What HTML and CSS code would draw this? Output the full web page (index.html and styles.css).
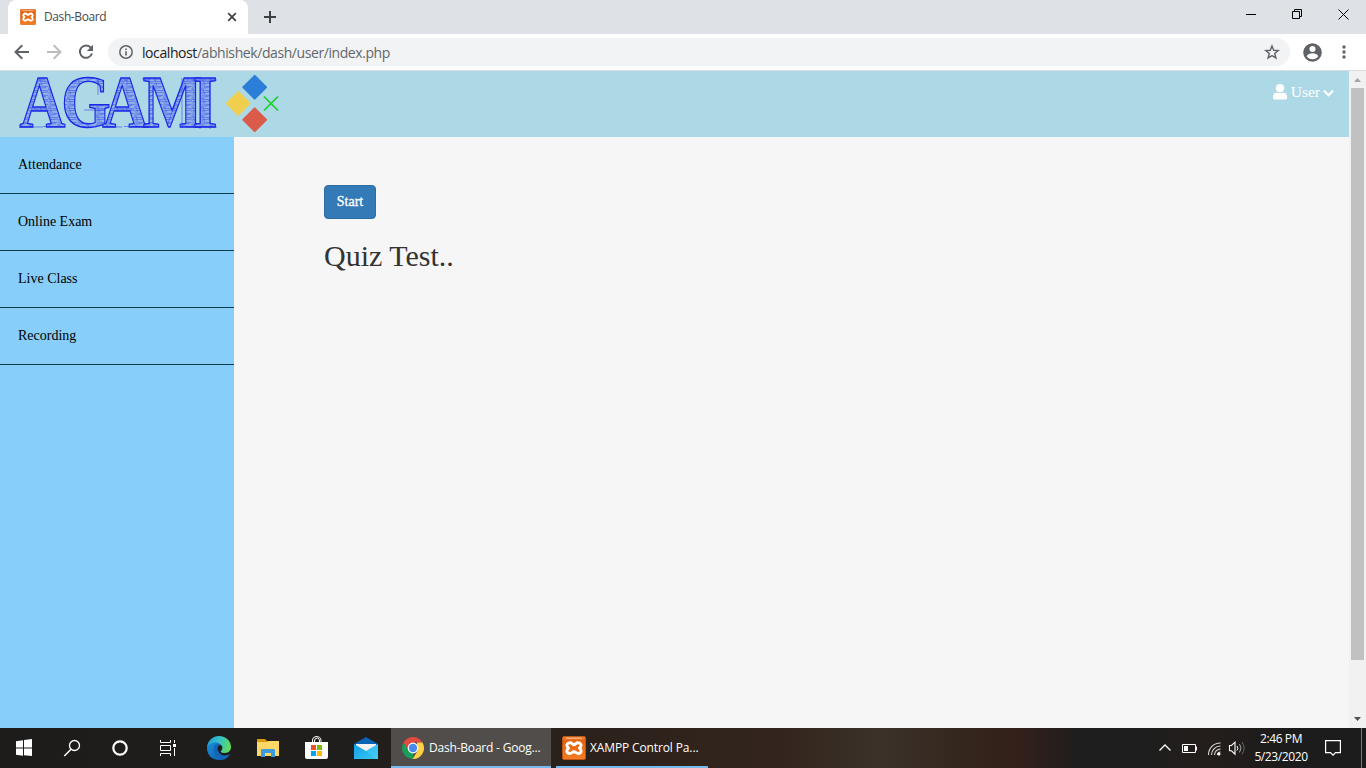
FILE: index.html
```html
<!DOCTYPE html>
<html lang="en">
<head>
<meta charset="utf-8">
<title>Dash-Board</title>
<link rel="stylesheet" href="styles.css">
</head>
<body>
<svg class="defs" width="0" height="0">
  <defs>
    <linearGradient id="xg" x1="0" y1="0" x2="0" y2="1"><stop offset="0" stop-color="#ee8540"/><stop offset=".2" stop-color="#e4620e"/><stop offset="1" stop-color="#f47d24"/></linearGradient>
    <symbol id="xampp" viewBox="0 0 24 24">
      <rect x=".5" y=".5" width="23" height="23" rx="1.500" fill="url(#xg)" stroke="#c95712" stroke-width=".8"/>
      <path d="M4 2.200H20" stroke="#f7c49d" stroke-width="1"/>
      <path d="M8.300 6.800c-2.800 0-4 1.800-3.100 3.500.5 1 1.300 1.100 1.300 1.800s-1.100.9-1.400 1.900c-.7 2 .7 3.500 2.800 3.500 1.900 0 2.300-1.700 4.100-1.700s2.200 1.700 4.100 1.700c2.100 0 3.500-1.500 2.800-3.500-.3-1-1.400-1.200-1.400-1.900s.8-.8 1.300-1.800c.9-1.700-.3-3.500-3.100-3.500-2 0-2.200 1.900-3.700 1.900s-1.700-1.900-3.700-1.900z" fill="none" stroke="#fff" stroke-width="2.900"/>
    </symbol>
  </defs>
</svg>
<div class="screen">
  <div class="tabstrip">
    <div class="tab">
      <svg width="16" height="16"><use href="#xampp"/></svg>
      <span class="tab-title">Dash-Board</span>
      <svg class="tab-close" width="10" height="10" viewBox="0 0 10 10"><path d="M1.200 1.200l7.600 7.600M8.800 1.200L1.200 8.800" stroke="#3c4043" stroke-width="1.700"/></svg>
    </div>
    <svg class="plus" width="12" height="12" viewBox="0 0 12 12"><path d="M6 0v12M0 6h12" stroke="#3c4043" stroke-width="2"/></svg>
    <div class="winbtns">
      <svg width="10" height="10"><path d="M0 5.500h10" stroke="#000"/></svg>
      <svg width="10" height="10" fill="none" stroke="#000"><path d="M.5 2.500h7v7h-7zM2.500 2.500v-2h7v7h-2"/></svg>
      <svg width="11" height="11" stroke="#000"><path d="M.5.5l10 10M10.500.5l-10 10"/></svg>
    </div>
  </div>
  <div class="toolbar">
    <svg class="nav" width="16" height="16" viewBox="0 0 16 16" fill="none" stroke="#5f6368" stroke-width="2"><path d="M15 8H2M8.300 1.200L1.500 8l6.800 6.800"/></svg>
    <svg class="nav" width="16" height="16" viewBox="0 0 16 16" fill="none" stroke="#babcbe" stroke-width="2"><path d="M1 8h13M7.700 1.200L14.500 8l-6.800 6.800"/></svg>
    <svg class="nav" width="16" height="16" viewBox="0 0 16 16"><path d="M13 3.800A6.200 6.200 0 1 0 14 9.500" fill="none" stroke="#5f6368" stroke-width="2"/><path d="M15 .8v6.200H8.800z" fill="#5f6368"/></svg>
    <div class="omnibox">
      <svg width="14" height="14" viewBox="0 0 14 14"><circle cx="7" cy="7" r="6.200" fill="none" stroke="#5f6368" stroke-width="1.500"/><path d="M7 6.200v4.300M7 3.400v1.600" stroke="#5f6368" stroke-width="1.600"/></svg>
      <span class="url"><b>localhost</b>/abhishek/dash/user/index.php</span>
      <svg class="star" width="16" height="16" viewBox="0 0 16 16"><path d="M8 2l1.700 4.300 4.500.3-3.500 2.900 1.200 4.500L8 11.600 4.100 14l1.200-4.500L1.800 6.600l4.500-.3z" fill="none" stroke="#5f6368" stroke-width="1.400"/></svg>
    </div>
    <svg class="profile" width="19" height="19" viewBox="0 0 19 19"><circle cx="9.500" cy="9.500" r="9.300" fill="#5f6368"/><circle cx="9.500" cy="6" r="3" fill="#fff"/><path d="M3.700 13.200c1-2.200 3.600-3 5.800-3s4.800.8 5.800 3c-1.300 1.900-3.300 3-5.800 3s-4.500-1.100-5.800-3z" fill="#fff"/></svg>
    <svg class="dots" width="4" height="14" fill="#5f6368"><circle cx="2" cy="2" r="1.700"/><circle cx="2" cy="7" r="1.700"/><circle cx="2" cy="12" r="1.700"/></svg>
  </div>
  <div class="viewport">
    <div class="page">
      <header class="header">
        <svg class="logo" width="290" height="66" viewBox="0 0 290 66">
          <defs>
            <pattern id="hatch" width="11" height="9" patternUnits="userSpaceOnUse">
              <rect width="11" height="9" fill="#93b2e8"/>
              <path d="M0 1l11 .8M0 4l11-1M1 6l10 .5M0 8.200l9-.6M2 0l2 5" stroke="#3048ea" stroke-width=".6"/>
            </pattern>
          </defs>
          <g class="wordmark">
            <text transform="scale(.87 1)" x="22.500 70.500 117.500 164 221.500" y="56.300">AGAMI</text>
            <path class="scratch" d="M19 56h24M43 55.500h22M102 56h20M124 55.500h24M142 8h18M186 9h31M142 56h14M186 56h31M38 9h8M119 9h9M84 39h22M31 39h18M114 39h18M98 8v16M149 7v50M182 7v50M200 7v51M210 7v51M167 55l16-44"/>
          </g>
          <rect x="-9" y="-9" width="18" height="18" rx="1" transform="translate(254.700 16.200) rotate(45)" fill="#2b7fd8"/>
          <rect x="-9" y="-9" width="18" height="18" rx="1" transform="translate(238.200 32.400) rotate(45)" fill="#efcf4d"/>
          <rect x="-9" y="-9" width="18" height="18" rx="1" transform="translate(254.700 48.700) rotate(45)" fill="#da5b4a"/>
          <path d="M264 25.500l14 14M278 25.500l-14 14" stroke="#19cf28" stroke-width="1.700"/>
        </svg>
        <div class="user">
          <svg width="14" height="16" viewBox="0 0 14 16" fill="#fff"><circle cx="7" cy="4.200" r="4.100"/><path d="M3.600 8.500c2.200 1 4.600 1 6.800 0C12.600 8.700 14 10.300 14 12.500V14c0 .9-.6 1.500-1.500 1.500h-11C.6 15.500 0 14.900 0 14v-1.500c0-2.200 1.400-3.800 3.600-4z"/></svg>
          <span>User</span>
          <svg class="chev" width="11" height="8" viewBox="0 0 11 8"><path d="M.9 1.600l4.600 4.600 4.600-4.600" fill="none" stroke="#fff" stroke-width="2.300"/></svg>
        </div>
      </header>
      <div class="body">
        <nav class="sidebar"><a>Attendance</a><a>Online Exam</a><a>Live Class</a><a>Recording</a></nav>
        <main class="content">
          <button class="start">Start</button>
          <h2>Quiz Test..</h2>
        </main>
      </div>
    </div>
    <div class="scrollbar">
      <svg width="17" height="17"><path d="M5 11l3.500-4 3.500 4z" fill="#a3a3a3"/></svg>
      <div class="thumb"></div>
      <svg class="down" width="17" height="17"><path d="M5 6h7l-3.500 4z" fill="#505050"/></svg>
    </div>
  </div>
  <div class="taskbar">
    <svg class="icons" width="391" height="40" viewBox="0 0 391 40">
      <defs>
        <linearGradient id="e1" x1="0" y1=".3" x2="1" y2=".5"><stop offset="0" stop-color="#239bd5"/><stop offset=".5" stop-color="#35c2c9"/><stop offset="1" stop-color="#62da55"/></linearGradient>
        <linearGradient id="e2" x1="0" y1="0" x2="1" y2="1"><stop offset="0" stop-color="#1b91df"/><stop offset="1" stop-color="#0c5aaa"/></linearGradient>
        <linearGradient id="m1" x1="0" y1="0" x2="1" y2="1"><stop offset="0" stop-color="#159be5"/><stop offset="1" stop-color="#38cdf5"/></linearGradient>
      </defs>
      <path fill="#fff" d="M16 13.200l7-1v7.300h-7zM24 12.100l8-1.100v8.500h-8zM16 20.500h7v7.300l-7-1zM24 20.500h8V28l-8-.7z"/>
      <g fill="none" stroke="#fff"><circle cx="74.500" cy="17.500" r="5" stroke-width="1.300"/><path d="M71 21.200L64.300 28" stroke-width="1.500"/><circle cx="120" cy="20" r="6.700" stroke-width="2.200"/>
      <path d="M160.500 12v2.500h10V12M160.500 28v-2.500h10V28M160.500 17.500h10v5h-10zM174.500 12v3M174.500 20v8"/></g><path d="M173 16h3v3h-3z" fill="#fff"/>
      <path fill="url(#e2)" d="M207 20c1-7 6-10 11-8 4 1 6 4 6 6-5-3-8 1-6 5 2 5 8 6 12 3-3 5-7 6-11 6-7 0-12-5-12-12z"/>
      <path fill="#1266b5" d="M214 19c1-3 4-4 7-3-4 1-5 4-3 7 2 5 8 6 12 3-2 4-6 6-10 6-5-3-7-8-6-13z"/>
      <path fill="url(#e1)" d="M207 19c1-7 6-11 12-11 7 0 12 5 12 11 0 5-4 6-7 6-2 0-4-1-3-2 2-2 2-5-1-7-4-3-10-1-13 3z"/>
      <path fill="#dc9b0c" d="M257 11h8l2 2h11v5h-21z"/><path fill="#ffd767" d="M257 14h10l2-1h10v15h-22z"/><path fill="#3c9bdd" d="M261 29v-7q0-1 1-1h12q1 0 1 1v7h-4v-4h-6v4z"/>
      <path fill="none" stroke="#fff" d="M312.500 15v-3q0-3 3.500-3.500 5 0 5 4v2M314.500 15v-2q0-3 3-3 2 0 2 3v2" stroke-width="1"/>
      <path fill="#fff" d="M305 14h23v15q0 2-2 2h-19q-2 0-2-2z"/><path fill="#f25022" d="M311 17h5v5h-5z"/><path fill="#7fba00" d="M317 17h5v5h-5z"/><path fill="#00a4ef" d="M311 23h5v5h-5z"/><path fill="#ffb900" d="M317 23h5v5h-5z"/>
      <path fill="#0b63b5" d="M354 16l12-7 12 7v5h-24z"/><path fill="#f4f2f2" d="M356 16h20v3l-10 7-10-7z"/><path fill="url(#m1)" d="M354 16l12 7 12-7v15h-24z"/><path fill="#54d0f8" d="M378 16v15h-1l-14-10 3 2z" opacity=".4"/>
    </svg>
    <div class="task task-active">
      <svg width="24" height="24" viewBox="0 0 24 24"><path fill="#e34a3e" d="M2.500 6.500A11 11 0 0 1 21.500 6.500H12l-4.700 8.300z"/><path fill="#179f59" d="M2.500 6.500l4.800 8.200 4.700 2.500v5.800A11 11 0 0 1 2.500 6.500z"/><path fill="#ffcf45" d="M21.500 6.500A11 11 0 0 1 11.500 23l5.200-8.300L16 6.500z"/><circle cx="12" cy="12" r="5.400" fill="#fff"/><circle cx="12" cy="12" r="4.200" fill="#4b88ee"/></svg>
      <span class="t1">Dash-Board - Goog...</span>
    </div>
    <div class="task task-open">
      <svg width="24" height="24"><use href="#xampp"/></svg>
      <span class="t2">XAMPP Control Pa...</span>
    </div>
    <div class="tray">
      <svg width="96" height="40" viewBox="0 0 96 40" fill="none" stroke="#fff">
        <path d="M9.500 22.500l5.500-5.500 5.500 5.500" stroke-width="1.300"/>
        <path d="M32.500 16.500h13v8h-13zM46.500 18.500v4"/><path d="M34 18h4v5h-4z" fill="#fff" stroke="none"/>
        <g stroke="#ddd" stroke-width="1.100"><path d="M58.500 27c0-7 5-12 12-12"/><path d="M61.500 27c0-5 4-9 9-9"/><path d="M64.500 27c0-3.500 3-6 6-6"/><path d="M67.500 27q0-3 3-3"/></g><circle cx="69" cy="26" r="1.500" fill="#fff" stroke="none"/>
        <path d="M79.500 17.500h2l3.500-3.300v12l-3.500-3.400h-2z" stroke-width="1.100"/><path d="M87 18q1.800 2.200 0 4.400"/><path d="M89.500 16q3 4.200 0 8.400" stroke="#aaa"/><path d="M92 14q4.200 6.200 0 12.400" stroke="#666"/>
      </svg>
      <div class="clock"><span class="time">2:46 PM</span><span class="date">5/23/2020</span></div>
      <svg class="action" width="16" height="16" viewBox="0 0 16 16" fill="none" stroke="#fff" stroke-width="1.200"><path d="M.6.6h14.800v12H10.500L8 15.200l-2.500-2.600H.6z"/></svg>
      <i class="peek"></i>
    </div>
  </div>
</div>
</body>
</html>
```
FILE: styles.css
```css
* { box-sizing: border-box; }
body { margin: 0; overflow: hidden; font-family: "Liberation Serif", serif; }
svg { display: block; flex: none; }
.defs { position: absolute; }
.screen { width: 1366px; height: 768px; display: flex; flex-direction: column; }

.tabstrip { height: 34px; flex: none; background: #dee1e6; display: flex; align-items: flex-start; padding-left: 8px; }
.tab { width: 240px; height: 34px; background: #fff; border-radius: 8px 8px 0 0; display: flex; align-items: center; padding: 0 11px 0 12px; font-family: "Open Sans", sans-serif; font-size: 12px; color: #45484b; }
.tab-title { margin-left: 8px; letter-spacing: -0.4px; padding-bottom: 1px; }
.tab-close { margin-left: auto; }
.plus { margin: 11px 0 0 16px; }
.winbtns { margin: 9px 17px 0 auto; display: flex; gap: 36px; }

.toolbar { height: 37px; flex: none; background: #fff; border-bottom: 1px solid #dadce0; display: flex; align-items: center; padding-left: 14px; }
.nav { margin-right: 16px; }
.omnibox { width: 1182px; height: 28px; margin-left: -2px; border-radius: 14px; background: #f1f3f4; display: flex; align-items: center; padding: 0 11px; }
.url { margin-left: 9px; font: 14px "Open Sans", sans-serif; letter-spacing: -0.42px; color: #63676b; white-space: nowrap; }
.url b { font-weight: 400; color: #202124; }
.star { margin-left: auto; margin-right: -1px; }
.profile { margin-left: 13px; }
.dots { margin-left: 20px; }

.viewport { flex: 1; display: flex; min-height: 0; }
.page { flex: 1; display: flex; flex-direction: column; background: #f6f6f6; }
.header { height: 66px; flex: none; background: #add8e6; display: flex; justify-content: space-between; }
.logo { overflow: visible; }
.wordmark text { font: bold 73px "Liberation Serif", serif; fill: url(#hatch); stroke: #1829e8; stroke-width: 1.3px; }
.scratch { fill: none; stroke: #1829e8; stroke-width: .8px; opacity: .6; }
.user { display: flex; align-items: center; height: 20px; margin: 11px 15px 0 0; font-size: 15.5px; line-height: 20px; color: #fff; }
.user span { margin-left: 4px; }
.chev { margin: 2px 0 0 3px; }
.body { flex: 1; display: flex; }
.sidebar { width: 234px; background: #87cefa; }
.sidebar a { display: block; height: 57px; padding: 18px; border-bottom: 1px solid #063c48; font-size: 14px; line-height: 20px; color: #000; }
.content { padding: 48px 90px; }
.start { display: block; width: 52px; height: 34px; padding: 0; border: 1px solid #2e6da4; border-radius: 4px; background: #337ab7; color: #fff; font: 14px/20px "Liberation Serif", serif; -webkit-text-stroke: .3px #fff; }
h2 { margin: 20px 0 0; font-size: 30px; line-height: 33px; font-weight: 400; color: #333; }
.scrollbar { width: 17px; background: #f1f1f1; display: flex; flex-direction: column; }
.thumb { width: 13px; height: 572px; margin-left: 2px; background: #c1c1c1; }
.down { margin-top: auto; }

.taskbar { height: 40px; flex: none; display: flex; background: linear-gradient(90deg, #1d1c1b 0, #201e1c 350px, #2a211b 560px, #33251d 780px, #3b3229 880px, #33241c 980px, #33201a 1020px, #1e1e1e 1080px, #1e1e1e 1150px, #241e1b 1200px, #1c1c1c 1290px); color: #fff; font: 12px "Open Sans", sans-serif; }
.task { height: 40px; display: flex; align-items: center; border-bottom: 2px solid #76b9ed; white-space: nowrap; padding-top: 2px; }
.task span { padding-bottom: 1px; }
.task-active { width: 160px; padding-left: 10px; background: #504d4a; }
.task-open { width: 152px; margin-left: 5px; padding-left: 6px; }
.t1 { margin-left: 4px; letter-spacing: -0.2px; }
.t2 { margin-left: 4px; letter-spacing: -0.13px; }
.tray { margin-left: auto; display: flex; align-items: center; }
.clock { width: 60px; margin-left: 5px; display: flex; flex-direction: column; align-items: center; line-height: 18px; padding-bottom: 1px; letter-spacing: -0.4px; }
.action { margin-left: 14px; }
.peek { width: 1px; height: 40px; margin: 0 4px 0 20px; background: #777; }
```
